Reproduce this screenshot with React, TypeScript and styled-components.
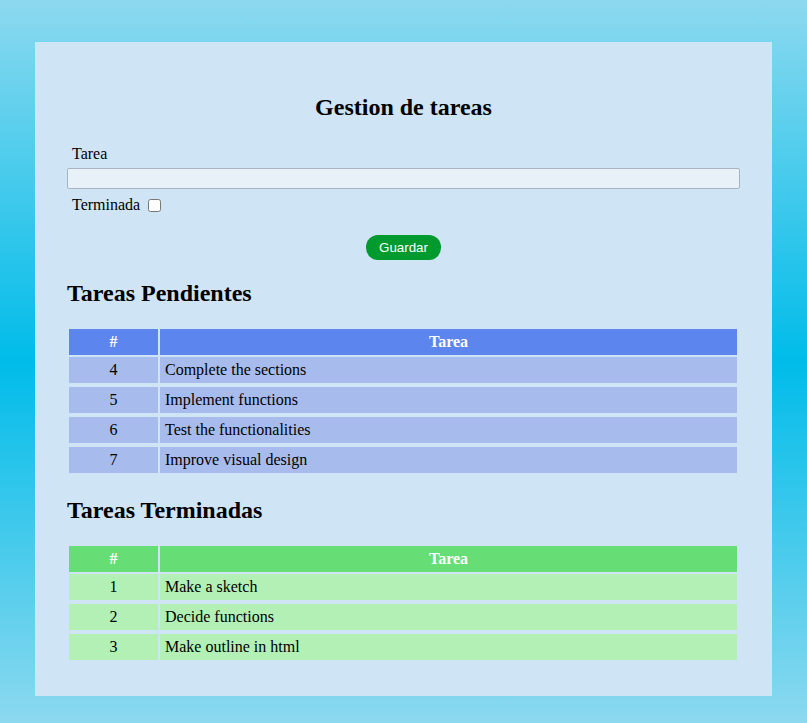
import React from "react";
import styled, { createGlobalStyle } from "styled-components";

type Task = { id: number; title: string };

const pending: Task[] = [
  { id: 4, title: "Complete the sections" },
  { id: 5, title: "Implement functions" },
  { id: 6, title: "Test the functionalities" },
  { id: 7, title: "Improve visual design" },
];

const done: Task[] = [
  { id: 1, title: "Make a sketch" },
  { id: 2, title: "Decide functions" },
  { id: 3, title: "Make outline in html" },
];

const palette = {
  blue: { head: "#5d85ee", row: "#a8bbed" },
  green: { head: "#67dd76", row: "#b3f0b6" },
};

function TaskTable({ tasks, tone }: { tasks: Task[]; tone: "blue" | "green" }) {
  return (
    <Table>
      <thead>
        <tr>
          <HeadCell $bg={palette[tone].head} $w="89px">#</HeadCell>
          <HeadCell $bg={palette[tone].head}>Tarea</HeadCell>
        </tr>
      </thead>
      <tbody>
        {tasks.map((t) => (
          <tr key={t.id}>
            <Cell $bg={palette[tone].row} $center>
              {t.id}
            </Cell>
            <Cell $bg={palette[tone].row}>{t.title}</Cell>
          </tr>
        ))}
      </tbody>
    </Table>
  );
}

export default function App() {
  return (
    <>
      <GlobalStyle />
      <Page>
        <Panel>
          <Title>Gestion de tareas</Title>
          <Form>
            <Label>Tarea</Label>
            <Input type="text" />
            <Label>
              Terminada <Check type="checkbox" />
            </Label>
            <ButtonRow>
              <SaveButton>Guardar</SaveButton>
            </ButtonRow>
          </Form>

          <Section>Tareas Pendientes</Section>
          <TaskTable tasks={pending} tone="blue" />

          <Section>Tareas Terminadas</Section>
          <TaskTable tasks={done} tone="green" />
        </Panel>
      </Page>
    </>
  );
}

const GlobalStyle = createGlobalStyle`
  html, body {
    margin: 0;
    padding: 0;
  }
  body {
    font-family: "Liberation Serif", "Times New Roman", serif;
    font-size: 16px;
    color: #000;
  }
`;

const Page = styled.div`
  min-height: 723px;
  box-sizing: border-box;
  padding: 42px 35px 27px;
  background: linear-gradient(to bottom, #8cd9ef 0%, #00bce9 50%, #8cd9ef 100%);
`;

const Panel = styled.div`
  background: #cfe4f5;
  padding: 32px;
  display: flex;
  flex-direction: column;
`;

const Title = styled.h2`
  margin: 19px 0 0;
  font-size: 24px;
  line-height: 28px;
  font-weight: bold;
  text-align: center;
`;

const Form = styled.div`
  display: flex;
  flex-direction: column;
  margin-top: 23px;
`;

const Label = styled.label`
  display: flex;
  align-items: center;
  padding-left: 5px;
  line-height: 20px;
  height: 20px;
  margin-bottom: 4px;
  white-space: pre;
`;

const Input = styled.input`
  box-sizing: border-box;
  width: 100%;
  height: 21px;
  margin: 0 0 6px;
  border: 1px solid #a9b4c2;
  border-radius: 2px;
  background: #e8f0f8;
  outline: none;
`;

const Check = styled.input`
  width: 13px;
  height: 13px;
  margin: 0 0 0 4px;
`;

const ButtonRow = styled.div`
  display: flex;
  justify-content: center;
  margin-top: 16px;
`;

const SaveButton = styled.button`
  width: 75px;
  height: 25px;
  border: none;
  border-radius: 12px;
  background: #009a2f;
  color: #fff;
  font-family: "Liberation Sans", Arial, sans-serif;
  font-size: 13.33px;
  cursor: pointer;
`;

const Section = styled.h2`
  margin: 19px 0 20px;
  font-size: 24px;
  line-height: 28px;
  font-weight: bold;
`;

const Table = styled.table`
  width: 672px;
  border-collapse: separate;
  border-spacing: 2px;
`;

const HeadCell = styled.th<{ $bg: string; $w?: string }>`
  background: ${(p) => p.$bg};
  color: #fff;
  font-weight: bold;
  height: 26px;
  padding: 0;
  text-align: center;
  width: ${(p) => p.$w ?? "auto"};
`;

const Cell = styled.td<{ $bg: string; $center?: boolean }>`
  background: ${(p) => p.$bg};
  height: 26px;
  padding: 0 0 0 ${(p) => (p.$center ? "0" : "5px")};
  text-align: ${(p) => (p.$center ? "center" : "left")};
  border-bottom: 2px solid #cfe4f5;
  box-sizing: content-box;
`;
